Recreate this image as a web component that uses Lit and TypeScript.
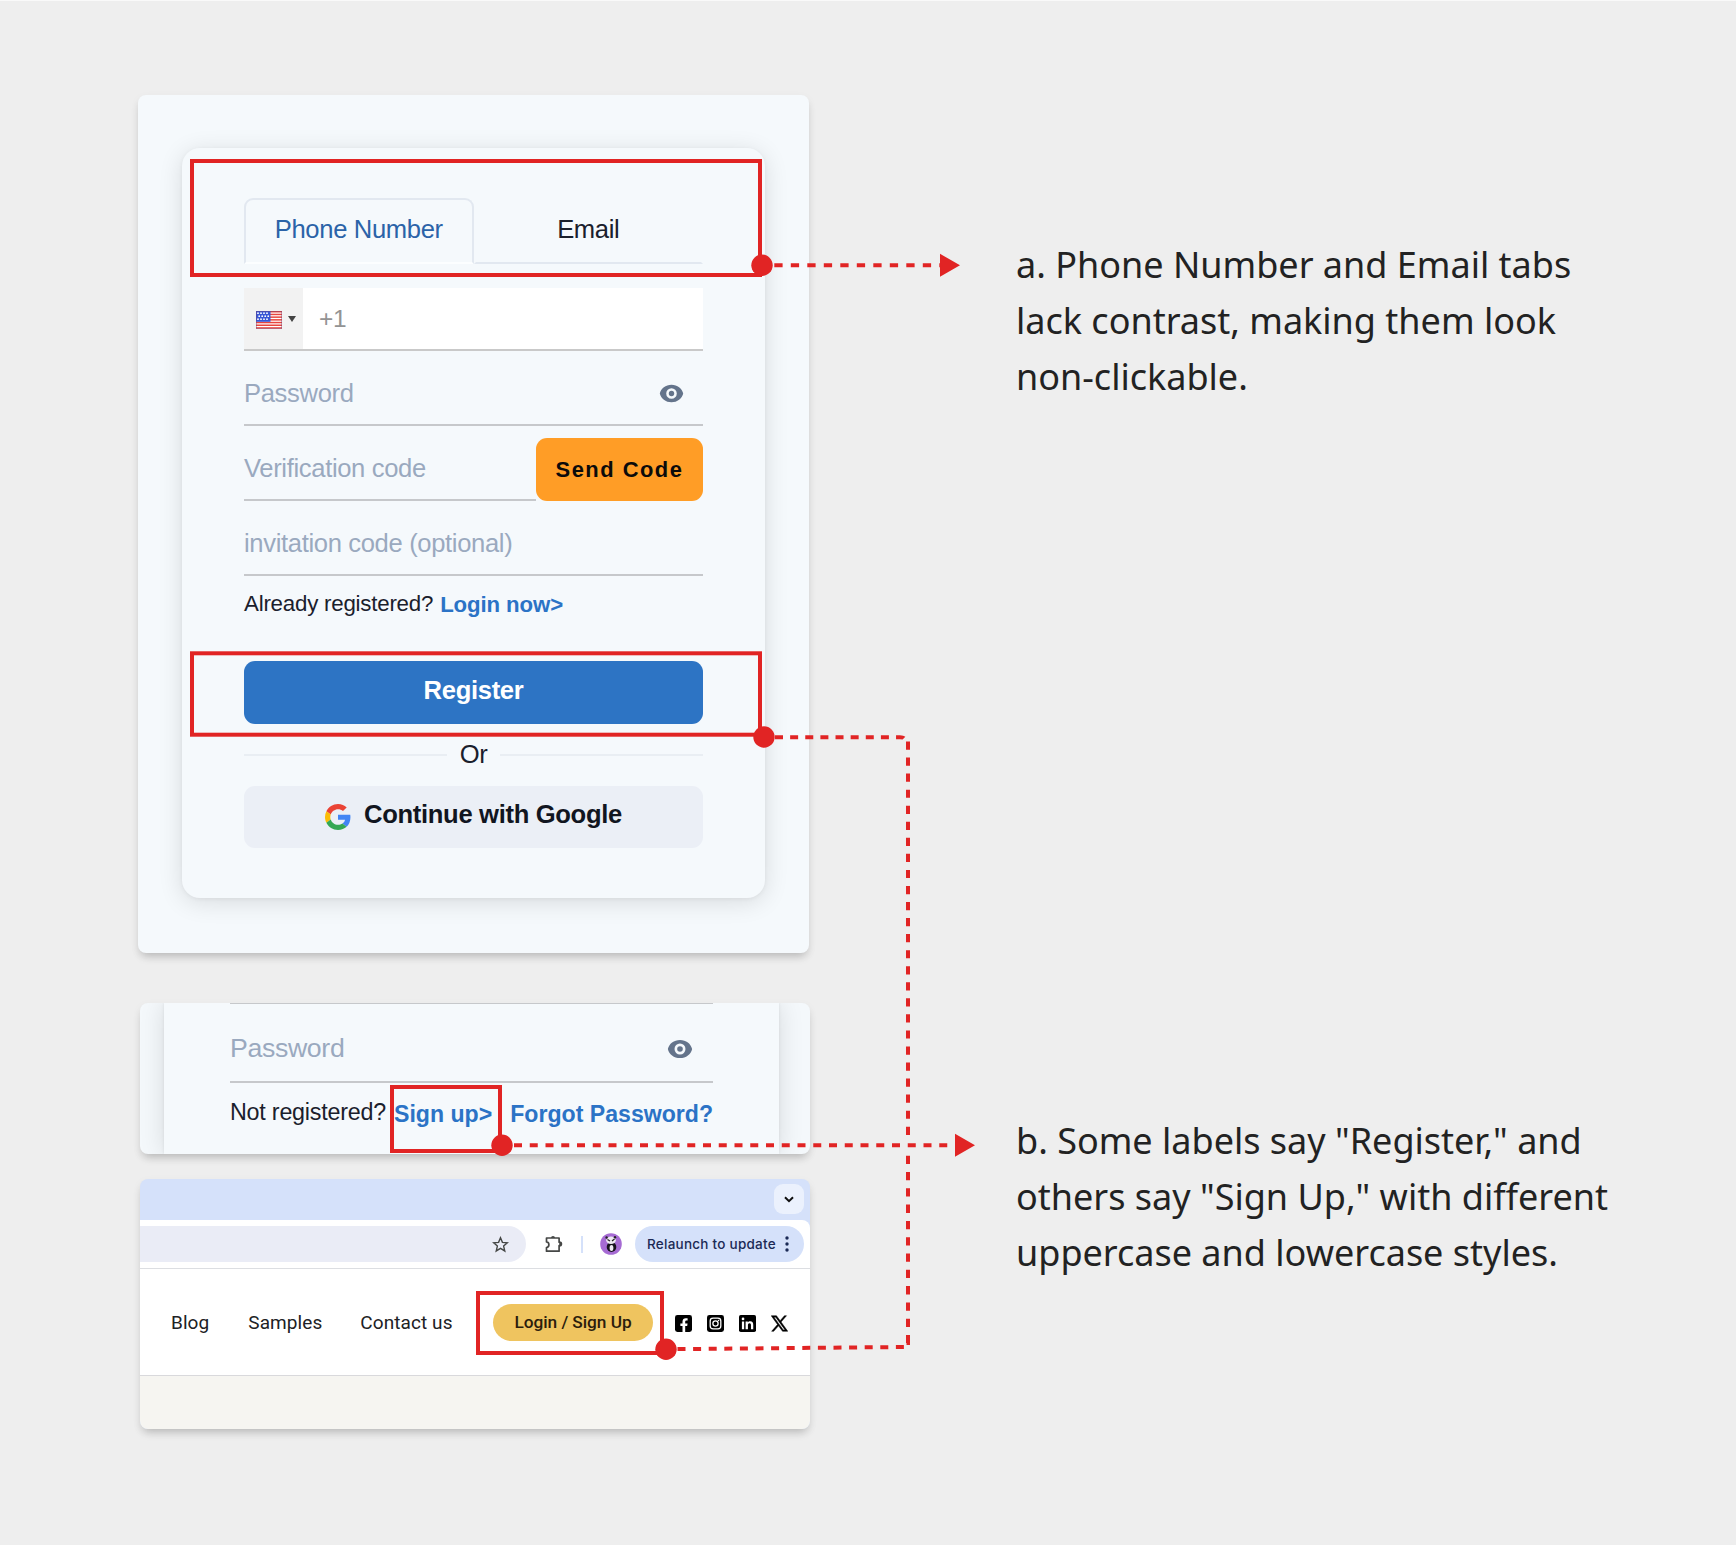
import { LitElement, html, css, svg } from "lit";
import { customElement, property } from "lit/decorators.js";

@customElement("eye-icon")
class EyeIcon extends LitElement {
  static styles = css`
    :host { display: block; width: 27px; height: 27px; }
    svg { display: block; width: 100%; height: 100%; }
  `;
  render() {
    return html`<svg viewBox="0 0 24 24" preserveAspectRatio="none">
      <path fill="#64748b" fill-rule="evenodd" d="M12 4.200C6.800 4.200 2.600 7.400 1.600 12c1 4.600 5.200 7.800 10.400 7.800s9.400-3.200 10.400-7.800C21.400 7.400 17.200 4.200 12 4.200zM12 16.700a4.700 4.700 0 1 1 0-9.400 4.700 4.700 0 0 1 0 9.400z"/>
      <circle cx="12" cy="12" r="2.400" fill="#64748b"/>
    </svg>`;
  }
}

@customElement("social-icon")
class SocialIcon extends LitElement {
  @property() name = "";
  static styles = css`
    :host { display: block; width: 17px; height: 17px; }
    svg { display: block; width: 100%; height: 100%; }
  `;
  private shape() {
    switch (this.name) {
      case "facebook":
        return svg`<rect width="24" height="24" rx="3.500"/><path fill="#fff" d="M10.600 24v-8.600H7.600v-3.500h3V9.300c0-3 1.800-4.700 4.600-4.700 1.300 0 2.600.2 2.600.2v3h-1.500c-1.500 0-1.900.9-1.900 1.800v2.300h3.300l-.5 3.500h-2.800V24z"/>`;
      case "instagram":
        return svg`<rect width="24" height="24" rx="3.500"/><g fill="none" stroke="#fff" stroke-width="1.800"><rect x="4.500" y="4.500" width="15" height="15" rx="4"/><circle cx="12" cy="12" r="3.700"/></g><circle cx="16.300" cy="7.700" r="1.100" fill="#fff"/>`;
      case "linkedin":
        return svg`<rect width="24" height="24" rx="2.500"/><g fill="#fff"><circle cx="5.700" cy="5.600" r="1.900"/><path d="M4.100 9h3.200v11H4.100zM9.300 9h3.100v1.500c.6-1 1.800-1.800 3.400-1.800 3.300 0 4.300 2 4.300 5V20h-3.200v-5.600c0-1.600-.4-2.800-2-2.800s-2.300 1.200-2.300 2.800V20H9.300z"/></g>`;
      default:
        return svg`<path stroke="#000" stroke-width=".7" d="M.3 1h7.400l5.200 7L19 1h2.900l-7.700 8.800L23.700 23h-7.400l-5.700-7.700L3.800 23H.9l8.300-9.500zM4.200 3l13.100 18h2.500L6.700 3z"/>`;
    }
  }
  render() {
    return html`<svg viewBox="0 0 24 24">${this.shape()}</svg>`;
  }
}

@customElement("register-panel")
class RegisterPanel extends LitElement {
  static styles = css`
    :host { display: block; width: 671px; height: 858px; box-sizing: border-box; padding: 53px 44px;
      background: #f5f9fc; border-radius: 8px; box-shadow: 0 6px 10px -3px rgba(0,0,0,.2), 0 3px 10px rgba(0,0,0,.05);
      font-family: "Liberation Sans", Arial, sans-serif; font-size: 25.600px; letter-spacing: -.35px; color: #1a202c; }
    .card { box-sizing: border-box; width: 583px; height: 750px; padding: 50px 62px 0; border-radius: 18px;
      background: #f5f9fc; box-shadow: 0 4px 24px rgba(0,0,0,.12), 0 1px 4px rgba(0,0,0,.05); }
    .tabs { display: flex; height: 66px; box-sizing: border-box; }
    .tab { flex: 1; display: flex; align-items: center; justify-content: center; box-sizing: border-box;
      padding-bottom: 4px; border: 2px solid transparent; border-bottom-color: #e2e8f0; }
    .tab.on { color: #2b63a8; border-color: #e2e8f0; border-bottom-color: #fcfeff; border-radius: 9px 9px 0 0; }
    .phone { display: flex; margin-top: 24px; height: 63px; box-sizing: border-box; background: #fff; border-bottom: 2px solid #c9c9c9; }
    .country { display: flex; align-items: center; gap: 6px; width: 59px; box-sizing: border-box; padding-left: 12px; background: #f2f2f2; }
    .flag { width: 26px; height: 18px; display: block; margin-top: 3px; }
    .caret { width: 0; margin-top: 1px; border: 4.500px solid transparent; border-top: 6px solid #444; border-bottom: 0; }
    .dial { display: flex; align-items: center; padding-left: 16px; color: #939393; font-size: 24.500px; }
    .row { display: flex; height: 75px; }
    .field { flex: 1; display: flex; align-items: center; justify-content: space-between; box-sizing: border-box;
      padding: 12px 18px 0 0; border-bottom: 2px solid #c6c8cb; color: #9aa9bf; }
    .send { align-self: flex-end; width: 167px; height: 63px; display: flex; align-items: center; justify-content: center;
      border-radius: 11px; background: #ff9d26; color: #0b0b0b; font-weight: 700; font-size: 21.900px; letter-spacing: 1.500px; box-sizing: border-box; padding-top: 1px; }
    .hint { display: flex; align-items: center; gap: 7px; height: 55px; font-size: 22.300px; letter-spacing: -.22px; }
    .hint b { padding-top: 3px; font-size: 22.200px; letter-spacing: -.1px; color: #2b73c6; }
    .btn { display: flex; align-items: center; justify-content: center; height: 62px; box-sizing: border-box;
      border-radius: 11px; padding-bottom: 5px; font-weight: 700; font-size: 25.600px; letter-spacing: -.33px; }
    .primary { margin-top: 30px; height: 63px; background: #2d74c4; color: #fff; }
    .or { display: flex; align-items: center; gap: 13px; height: 62px; }
    .or i { flex: 1; height: 2px; background: #e9eef3; }
    .or span { padding-bottom: 2px; }
    .google { background: #ebeff6; gap: 13px; color: #11151f; }
    .google svg { width: 26px; height: 26px; margin-top: 4px; }
  `;
  render() {
    return html`<div class="card">
      <div class="tabs"><div class="tab on">Phone Number</div><div class="tab">Email</div></div>
      <div class="phone">
        <div class="country">
          <svg class="flag" viewBox="0 0 26 18">
            <rect width="26" height="18" fill="#fff"/>
            ${[0, 2.700, 5.400, 8.100, 10.800, 13.500, 16.200].map((y) => svg`<rect y=${y} width="26" height="1.500" fill="#e8453f"/>`)}
            <rect width="14.500" height="10.800" fill="#3857d6"/>
            ${[2.200, 5.200, 8.200].map((y, r) => [2, 5, 8, 11].map((x) => svg`<circle cx=${x + (r % 2) * 1.200} cy=${y} r=".9" fill="#fff"/>`))}
            <rect x=".4" y=".4" width="25.200" height="17.200" fill="none" stroke="#6b3f74" stroke-opacity=".5" stroke-width=".8"/>
          </svg>
          <span class="caret"></span>
        </div>
        <div class="dial">+1</div>
      </div>
      <div class="row"><div class="field">Password<eye-icon></eye-icon></div></div>
      <div class="row"><div class="field">Verification code</div><div class="send">Send Code</div></div>
      <div class="row"><div class="field">invitation code (optional)</div></div>
      <div class="hint"><span>Already registered?</span><b>Login now&gt;</b></div>
      <div class="btn primary">Register</div>
      <div class="or"><i></i><span>Or</span><i></i></div>
      <div class="btn google">
        <svg viewBox="0 0 48 48"><path fill="#EA4335" d="M24 9.500c3.540 0 6.710 1.220 9.210 3.600l6.850-6.850C35.900 2.380 30.470 0 24 0 14.620 0 6.510 5.380 2.560 13.220l7.980 6.190C12.430 13.720 17.740 9.500 24 9.500z"/><path fill="#4285F4" d="M46.980 24.550c0-1.570-.15-3.090-.38-4.550H24v9.020h12.940c-.58 2.960-2.260 5.480-4.780 7.180l7.730 6c4.510-4.180 7.090-10.360 7.090-17.650z"/><path fill="#FBBC05" d="M10.530 28.590A14.500 14.500 0 0 1 9.770 24c0-1.600.27-3.140.76-4.590l-7.980-6.190A24 24 0 0 0 0 24c0 3.880.92 7.540 2.560 10.780z"/><path fill="#34A853" d="M24 48c6.480 0 11.930-2.130 15.890-5.810l-7.730-6c-2.150 1.450-4.920 2.300-8.160 2.300-6.260 0-11.570-4.220-13.470-9.910l-7.980 6.190C6.510 42.620 14.620 48 24 48z"/></svg>
        <span>Continue with Google</span>
      </div>
    </div>`;
  }
}

@customElement("login-panel")
class LoginPanel extends LitElement {
  static styles = css`
    :host { display: block; width: 670px; height: 151px; background: #f4f8fb; border-radius: 8px;
      box-shadow: 0 6px 10px -3px rgba(0,0,0,.2), 0 3px 10px rgba(0,0,0,.05);
      font-family: "Liberation Sans", Arial, sans-serif; color: #1a202c; }
    .clip { width: 670px; height: 151px; box-sizing: border-box; padding: 0 31px 0 24px; overflow: hidden; border-radius: 8px; }
    .card { height: 151px; box-sizing: border-box; padding: 0 66px; background: #f5f9fc;
      box-shadow: 0 0 24px rgba(0,0,0,.12), 0 0 3px rgba(0,0,0,.08); }
    .field { display: flex; align-items: center; justify-content: space-between; box-sizing: border-box; height: 80px;
      padding: 12px 19px 0 0; border: solid #c6c8cb; border-width: 1px 0 2px; font-size: 26.700px; letter-spacing: -.35px; color: #9aa9bf; }
    .links { display: flex; align-items: center; height: 59px; font-size: 23.300px; letter-spacing: -.22px; white-space: nowrap; }
    b { padding-top: 3px; font-size: 23.100px; letter-spacing: 0; color: #2b73c6; }
    .up { margin-left: 8px; }
    .forgot { margin-left: auto; }
    eye-icon { width: 28px; height: 28px; }
  `;
  render() {
    return html`<div class="clip"><div class="card">
      <div class="field">Password<eye-icon></eye-icon></div>
      <div class="links"><span>Not registered?</span><b class="up">Sign up&gt;</b><b class="forgot">Forgot Password?</b></div>
    </div></div>`;
  }
}

@customElement("browser-panel")
class BrowserPanel extends LitElement {
  static styles = css`
    :host { display: block; width: 670px; height: 250px; overflow: hidden; border-radius: 8px; background: #d5e1fa;
      box-shadow: 0 6px 10px -3px rgba(0,0,0,.2), 0 3px 10px rgba(0,0,0,.05); font-family: Roboto, sans-serif; color: #202124; }
    .strip { display: flex; justify-content: flex-end; height: 41px; box-sizing: border-box; padding: 5px 6px; }
    .chev { display: flex; align-items: center; justify-content: center; width: 30px; height: 30px; border-radius: 9px; background: #ebf1fd; }
    .chev svg { width: 10px; height: 7px; }
    .bar { display: flex; align-items: center; height: 49px; box-sizing: border-box; padding: 0 6px 0 0; background: #fff;
      border-bottom: 1px solid #dcdee2; border-radius: 0 8px 0 0; }
    .url { display: flex; align-items: center; justify-content: flex-end; width: 386px; height: 36px; box-sizing: border-box;
      padding-right: 17px; border-radius: 0 18px 18px 0; background: #eaecf6; }
    .url svg { width: 17px; height: 17px; }
    .puzzle { width: 18px; height: 18px; margin-left: 19px; }
    .sep { width: 2px; height: 17px; margin-left: 18px; background: #d5e1fa; }
    .avatar { width: 22px; height: 22px; margin-left: 17px; }
    .update { display: flex; align-items: center; margin-left: auto; width: 169px; height: 36px; box-sizing: border-box; padding-left: 12px;
      border-radius: 18px; background: #d5e1fa; color: #1b2a55; font: 450 13.500px Inter, sans-serif; letter-spacing: .25px; white-space: nowrap; }
    .more { width: 4px; height: 16px; margin-left: auto; margin-right: 15px; }
    .nav { display: flex; align-items: center; height: 107px; box-sizing: border-box; padding: 0 22px 0 31px; background: #fff;
      border-bottom: 1px solid #d9d9dc; font-size: 19px; letter-spacing: .08px; white-space: nowrap; }
    .nav span:nth-child(2) { margin-left: 39px; }
    .nav span:nth-child(3) { margin-left: 38px; }
    .login { display: flex; align-items: center; justify-content: center; margin-left: auto; margin-right: 22px; width: 160px; height: 37px;
      border-radius: 19px; background: #efc45f; color: #2c1d0c; font-weight: 500; font-size: 17.300px; letter-spacing: -.05px; }
    .social { display: flex; gap: 15px; margin-top: 3px; }
    .page { height: 53px; background: #f6f5f1; }
  `;
  render() {
    return html`
      <div class="strip"><div class="chev"><svg viewBox="0 0 10 7"><path d="M1 1.200l4 4 4-4" fill="none" stroke="#111" stroke-width="2"/></svg></div></div>
      <div class="bar">
        <div class="url"><svg viewBox="0 0 24 24"><path d="M12 2.500l2.700 6.500 7 .6-5.300 4.600 1.600 6.900-6-3.700-6 3.700 1.600-6.900L2.300 9.600l7-.6z" fill="none" stroke="#454746" stroke-width="2"/></svg></div>
        <svg class="puzzle" viewBox="0 0 18 18"><path d="M1.500 3h12.600v4.200h.6a1.700 1.700 0 0 1 0 3.400h-.6V16.200H1.500v-3.700c3.200-.4 3.200-5.200 0-5.600z" fill="none" stroke="#454746" stroke-width="1.700" stroke-linejoin="round"/><path d="M6 3a2 2 0 0 1 4 0zM14.200 7a2 2 0 0 1 0 4z" fill="#454746"/></svg>
        <i class="sep"></i>
        <svg class="avatar" viewBox="0 0 22 22"><circle cx="11" cy="11" r="10.800" fill="#a66bd3"/><ellipse cx="11.500" cy="14" rx="4.800" ry="5" fill="#17131c"/><ellipse cx="11" cy="7.300" rx="4.800" ry="3.700" fill="#eee9f2"/><path d="M7.500 6.500l2.500 1.500M14.500 6l-2.500 2" stroke="#222" stroke-width="1.300"/><ellipse cx="11.500" cy="15" rx="1.900" ry="3" fill="#eee9f2"/><circle cx="6.600" cy="4.500" r="1.200" fill="#222"/><circle cx="15" cy="4.200" r="1.200" fill="#222"/></svg>
        <div class="update">Relaunch to update<svg class="more" viewBox="0 0 4 16"><g fill="#1b2a55"><circle cx="2" cy="2" r="1.700"/><circle cx="2" cy="8" r="1.700"/><circle cx="2" cy="14" r="1.700"/></g></svg></div>
      </div>
      <div class="nav">
        <span>Blog</span><span>Samples</span><span>Contact us</span>
        <div class="login">Login / Sign Up</div>
        <div class="social">${["facebook", "instagram", "linkedin", "x"].map((n) => html`<social-icon name=${n}></social-icon>`)}</div>
      </div>
      <div class="page"></div>`;
  }
}

@customElement("app-root")
export class AppRoot extends LitElement {
  static styles = css`
    :host { display: block; }
    .board { position: relative; display: flex; gap: 206px; width: 1736px; height: 1545px; box-sizing: border-box; overflow: hidden;
      padding: 95px 0 0 138px; background: #eeeeee; box-shadow: inset 0 1px #f9f9f9; }
    .shots { display: flex; flex-direction: column; align-items: flex-start; width: 672px; }
    login-panel { margin: 50px 0 0 2px; }
    browser-panel { margin: 25px 0 0 2px; }
    .notes { display: flex; flex-direction: column; gap: 708px; padding-top: 142px;
      font: 36px/56px "Noto Sans", sans-serif; color: #222; white-space: nowrap; }
    .marks { position: absolute; left: 0; top: 0; width: 1736px; height: 1545px; pointer-events: none; }
  `;
  render() {
    const red = "#e12424";
    const boxes = [
      [190, 159, 572, 118],
      [190, 651.300, 572, 85.400],
      [390, 1085, 112, 68],
      [476, 1291, 188, 64],
    ];
    const dots = [[762, 265.300], [764, 737], [502, 1145.200], [666, 1349.200]];
    return html`<div class="board">
      <div class="shots">
        <register-panel></register-panel>
        <login-panel></login-panel>
        <browser-panel></browser-panel>
      </div>
      <div class="notes">
        <div>a. Phone Number and Email tabs<br>lack contrast, making them look<br>non-clickable.</div>
        <div>b. Some labels say "Register," and<br>others say "Sign Up," with different<br>uppercase and lowercase styles.</div>
      </div>
      <svg class="marks" viewBox="0 0 1736 1545">
        <g fill="none" stroke=${red} stroke-width="4">
          ${boxes.map(([x, y, w, h]) => svg`<rect x=${x + 2} y=${y + 2} width=${w - 4} height=${h - 4}/>`)}
          <path d="M774.300 265.300H940" stroke-dasharray="8.300 8.200"/>
          <path d="M514 1145.200H950" stroke-dasharray="8 7.750"/>
          <path d="M775 737.200H900q3 0 4 1" stroke-dasharray="8 7.130"/>
          <path d="M908 741.500V1141" stroke-dasharray="8.200 7.850"/>
          <path d="M908 1155.700V1336" stroke-dasharray="8.300 8"/>
          <path d="M908 1335V1343q0 0-1.500 0"/>
          <path d="M677.500 1349.100L904 1347" stroke-dasharray="8 7.600"/>
        </g>
        <g fill=${red}>
          ${dots.map(([x, y]) => svg`<circle cx=${x} cy=${y} r="10.700"/>`)}
          <path d="M940 253.800l20 11.500-20 11.500zM955 1133.700l20 11.500-20 11.500z"/>
        </g>
      </svg>
    </div>`;
  }
}
